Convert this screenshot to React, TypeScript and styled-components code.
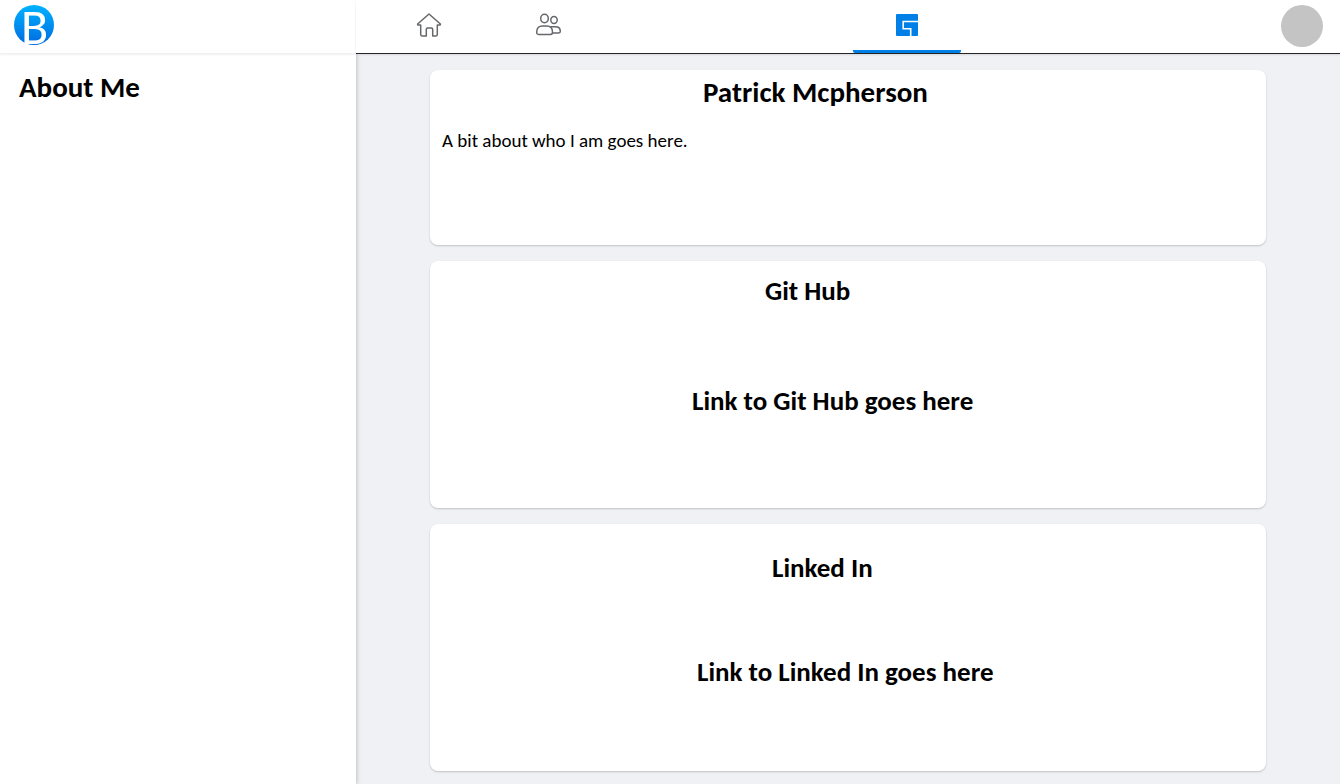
import React from "react";
import styled, { createGlobalStyle } from "styled-components";

const GlobalStyle = createGlobalStyle`
  *, *::before, *::after { box-sizing: border-box; }
  body {
    margin: 0;
    background: #eff1f5;
    color: #000;
    font-family: Calibri, Carlito, "Open Sans", sans-serif;
  }
  h1, h2, h3, p { margin: 0; }
`;

const Page = styled.div`
  display: grid;
  grid-template-columns: minmax(200px, 356px) minmax(0, 1fr);
  grid-template-rows: 54px 1fr;
  min-height: 100vh;
`;

const Brand = styled.div`
  display: flex;
  padding: 5px 14px;
  background: #fff;
  border-bottom: 1px solid #f0f0f0;
  box-shadow: 0 1px 2px rgba(0, 0, 0, 0.06);
  z-index: 1;
`;

const BrandLink = styled.a`
  display: block;
  width: 40px;
  height: 40px;
`;

const LogoMark = styled.svg`
  display: block;
  overflow: visible;
`;

const TopBar = styled.header`
  display: flex;
  justify-content: space-between;
  padding: 0 17px 0 19px;
  background: #fff;
  border-bottom: 1px solid #242424;
  box-shadow: 0 1px 2px rgba(0, 0, 0, 0.1);
  z-index: 1;
`;

const Tabs = styled.nav`
  display: flex;
  flex: 0 1 586px;
  gap: 11px;
`;

const Tab = styled.a<{ $active?: boolean }>`
  display: flex;
  justify-content: center;
  width: 108px;
  padding-top: 11px;
  color: ${(p) => (p.$active ? "#0080e6" : "#65676b")};
  margin-left: ${(p) => (p.$active ? "auto" : "0")};
  background: linear-gradient(currentColor, currentColor) bottom / 100% ${(p) => (p.$active ? "3px" : "0")} no-repeat;
  border-radius: 2px;
`;

const Avatar = styled.button`
  width: 42px;
  height: 42px;
  margin-top: 5px;
  padding: 0;
  border: 0;
  border-radius: 50%;
  background: #c4c4c4;
`;

const Sidebar = styled.aside`
  padding: 16px 19px;
  background: #fff;
  box-shadow: 1px 0 4px rgba(0, 0, 0, 0.2);
`;

const Title = styled.h1`
  font-size: 29px;
  line-height: 34px;
  font-weight: 700;
`;

const Feed = styled.main`
  display: flex;
  flex-direction: column;
  align-items: center;
  gap: 16px;
  padding: 16px 20px 13px;
`;

const Card = styled.section<{ $height: number; $top: number }>`
  width: 100%;
  max-width: 836px;
  min-height: ${(p) => p.$height}px;
  padding: ${(p) => p.$top}px 12px 12px;
  border-radius: 8px;
  background: #fff;
  box-shadow: 0 1px 2px rgba(0, 0, 0, 0.2);
`;

const Name = styled.h2<{ $indent: number }>`
  padding-left: ${(p) => p.$indent}px;
  font-size: 29px;
  line-height: 34px;
`;

const Heading = styled.h3<{ $indent: number; $gap?: number }>`
  margin-top: ${(p) => p.$gap ?? 0}px;
  padding-left: ${(p) => p.$indent}px;
  font-size: 27px;
  line-height: 32px;
`;

const Text = styled.p`
  margin-top: 20px;
  font-size: 19px;
  line-height: 24px;
`;

const Logo = () => (
  <LogoMark width="40" height="40" viewBox="0 0 40 40" aria-hidden="true">
    <defs>
      <linearGradient id="disc" x1="0" y1="0" x2="0" y2="1">
        <stop offset="0" stopColor="#00b2ff" />
        <stop offset="1" stopColor="#006ae0" />
      </linearGradient>
    </defs>
    <circle cx="20" cy="20" r="20" fill="url(#disc)" />
    <text x="7" y="39" fill="#fff" fontFamily="Calibri, Carlito, sans-serif" fontSize="50">B</text>
  </LogoMark>
);

const HomeIcon = () => (
  <svg width="28" height="28" viewBox="0 0 28 28" fill="none" stroke="currentColor" strokeWidth="1.5" strokeLinejoin="round" aria-hidden="true">
    <path d="M14 3 L25.4 13 Q25.6 14 24.6 14 H22.3 V23.6 Q22.3 25 21 25 H17.7 V18.2 Q17.7 17 16.5 17 H12.5 Q11.3 17 11.3 18.2 V25 H7 Q5.7 25 5.7 23.6 V14 H3.4 Q2.4 14 2.6 13 Z" />
  </svg>
);

const FriendsIcon = () => (
  <svg width="28" height="28" viewBox="0 0 28 28" fill="none" stroke="currentColor" strokeWidth="1.5" aria-hidden="true">
    <ellipse cx="10.5" cy="7.5" rx="3.8" ry="4.2" />
    <ellipse cx="20" cy="9" rx="3.2" ry="3.5" />
    <path d="M2.7 21.2 C2.7 17 5.3 15 8.5 15 H12.7 C16 15 18.5 17 18.5 21.2 C18.5 22.7 17.8 23.4 16.5 23.4 H4.5 C3.3 23.4 2.7 22.7 2.7 21.2 Z" />
    <path d="M16.4 15.7 H21.5 C24.6 15.7 26.3 17.8 26.3 20.3 C26.3 21.5 25.8 21.9 24.8 21.9 H18.5" />
  </svg>
);

const GamingIcon = () => (
  <svg width="28" height="28" viewBox="0 0 28 28" aria-hidden="true">
    <rect x="3" y="3" width="22" height="22" rx="1" fill="currentColor" />
    <path d="M25 10.5 H10.2 V17.8 H17.7 V25" fill="none" stroke="#fff" strokeWidth="1.6" />
  </svg>
);

export default function App() {
  return (
    <>
      <GlobalStyle />
      <Page>
        <Brand>
          <BrandLink href="#" aria-label="Home page"><Logo /></BrandLink>
        </Brand>
        <TopBar>
          <Tabs>
            <Tab href="#home" aria-label="Home"><HomeIcon /></Tab>
            <Tab href="#friends" aria-label="Friends"><FriendsIcon /></Tab>
            <Tab href="#gaming" aria-label="Gaming" aria-current="page" $active><GamingIcon /></Tab>
          </Tabs>
          <Avatar type="button" aria-label="Account" />
        </TopBar>
        <Sidebar>
          <Title>About Me</Title>
        </Sidebar>
        <Feed>
          <Card $height={175} $top={5}>
            <Name $indent={261}>Patrick Mcpherson</Name>
            <Text>A bit about who I am goes here.</Text>
          </Card>
          <Card $height={247} $top={14}>
            <Heading $indent={323}>Git Hub</Heading>
            <Heading $indent={250} $gap={78}>Link to Git Hub goes here</Heading>
          </Card>
          <Card $height={247} $top={28}>
            <Heading $indent={330}>Linked In</Heading>
            <Heading $indent={255} $gap={72}>Link to Linked In goes here</Heading>
          </Card>
        </Feed>
      </Page>
    </>
  );
}
